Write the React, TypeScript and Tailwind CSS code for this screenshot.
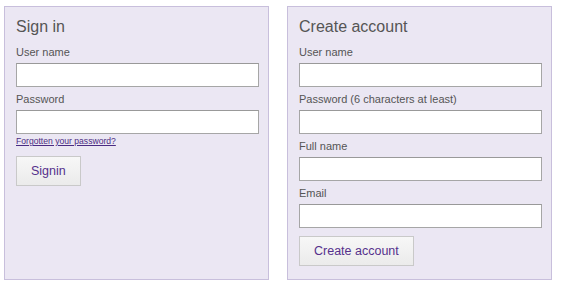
import type { ReactNode } from 'react'

function Field({ label }: { label: string }) {
  return (
    <div className="flex flex-col">
      <label className="text-[11px] leading-[14px] text-[#555]">{label}</label>
      <input
        type="text"
        className="mt-[4px] h-[24px] w-full border border-[#a6a6a6] border-t-[#999] bg-white px-1 text-[12px] outline-none"
      />
    </div>
  )
}

function Panel({ title, children }: { title: string; children: ReactNode }) {
  return (
    <div className="flex h-[274px] w-[265px] flex-col border border-[#c8bfdc] bg-[#ebe7f3] pl-[11px] pr-[9px] pt-[10px]">
      <h2 className="mb-[8px] text-[16px] leading-[20px] text-[#555]">{title}</h2>
      {children}
    </div>
  )
}

function Button({ children }: { children: ReactNode }) {
  return (
    <button
      type="button"
      className="h-[30px] self-start border border-[#c9c9c9] bg-gradient-to-b from-[#f7f7f7] to-[#ebebeb] px-[14px] text-[12.5px] text-[#55308c]"
    >
      {children}
    </button>
  )
}

export default function App() {
  return (
    <div
      className="flex h-[288px] w-[562px] gap-[18px] bg-white pl-[4px] pt-[6px]"
      style={{ fontFamily: '"Liberation Sans", Arial, sans-serif' }}
    >
      <Panel title="Sign in">
        <div className="flex flex-col gap-[5px]">
          <Field label="User name" />
          <Field label="Password" />
        </div>
        <a href="#" className="mt-[1px] text-[8.6px] leading-[12px] text-[#4a2b82] underline">
          Forgotten your password?
        </a>
        <div className="mt-[9px] flex">
          <Button>Signin</Button>
        </div>
      </Panel>
      <Panel title="Create account">
        <div className="flex flex-col gap-[5px]">
          <Field label="User name" />
          <Field label="Password (6 characters at least)" />
          <Field label="Full name" />
          <Field label="Email" />
        </div>
        <div className="mt-[8px] flex">
          <Button>Create account</Button>
        </div>
      </Panel>
    </div>
  )
}
